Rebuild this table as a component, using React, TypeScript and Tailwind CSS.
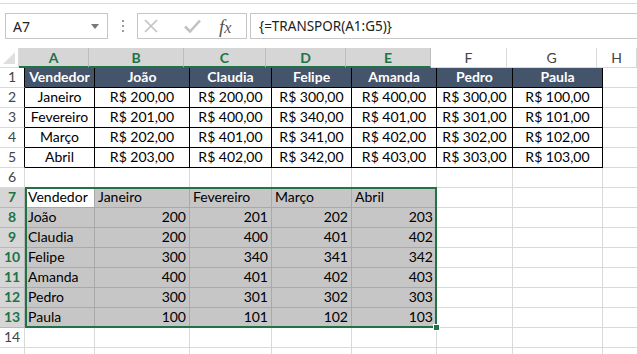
import React from 'react';

const COLS = ['A', 'B', 'C', 'D', 'E', 'F', 'G', 'H'];
const WIDTHS = ['w-[70px]', 'w-[95px]', 'w-[82px]', 'w-[80px]', 'w-[85px]', 'w-[76px]', 'w-[90px]', 'w-[40px]'];

const table = [
  ['Vendedor', 'João', 'Claudia', 'Felipe', 'Amanda', 'Pedro', 'Paula'],
  ['Janeiro', 'R$ 200,00', 'R$ 200,00', 'R$ 300,00', 'R$ 400,00', 'R$ 300,00', 'R$ 100,00'],
  ['Fevereiro', 'R$ 201,00', 'R$ 400,00', 'R$ 340,00', 'R$ 401,00', 'R$ 301,00', 'R$ 101,00'],
  ['Março', 'R$ 202,00', 'R$ 401,00', 'R$ 341,00', 'R$ 402,00', 'R$ 302,00', 'R$ 102,00'],
  ['Abril', 'R$ 203,00', 'R$ 402,00', 'R$ 342,00', 'R$ 403,00', 'R$ 303,00', 'R$ 103,00'],
];

const transposed = [
  ['Vendedor', 'Janeiro', 'Fevereiro', 'Março', 'Abril'],
  ['João', '200', '201', '202', '203'],
  ['Claudia', '200', '400', '401', '402'],
  ['Felipe', '300', '340', '341', '342'],
  ['Amanda', '400', '401', '402', '403'],
  ['Pedro', '300', '301', '302', '303'],
  ['Paula', '100', '101', '102', '103'],
];

const cellValue = (row: number, col: number) => {
  if (row >= 1 && row <= 5 && col <= 6) return table[row - 1][col];
  if (row >= 7 && row <= 13 && col <= 4) return transposed[row - 7][col];
  return '';
};

const Cell = ({ row, col }: { row: number; col: number }) => {
  const inTable = row >= 1 && row <= 5 && col <= 6;
  const isHead = row === 1 && col <= 6;
  const inSel = row >= 7 && row <= 13 && col <= 4;
  const active = row === 7 && col === 0;
  const value = cellValue(row, col);
  const isNum = inSel && row > 7 && col > 0;

  return (
    <div
      className={[
        'box-border h-[20px] shrink-0 border-r border-b overflow-hidden whitespace-nowrap flex items-end pb-[1px] px-[3px] leading-[18px]',
        WIDTHS[col],
        inTable ? 'border-black' : inSel ? 'border-[#a9a9a9]' : 'border-[#d9d9d9]',
        isHead ? 'bg-[#44546a] text-white font-bold justify-center' : '',
        inTable && !isHead ? 'justify-center text-black' : '',
        inSel && !active ? 'bg-[#c6c6c6]' : '',
        active ? 'bg-white' : '',
        isNum ? 'justify-end' : '',
      ].join(' ')}
    >
      {value}
    </div>
  );
};

const RowHeader = ({ row, label }: { row: number; label: boolean }) => {
  const sel = row >= 7 && row <= 13;
  return (
    <div
      className={[
        'box-border w-[25px] h-[20px] shrink-0 border-r border-b flex items-end justify-center pb-[1px] leading-[18px]',
        sel ? 'bg-[#d6d6d6] text-[#217346] font-bold border-b-[#b8b8b8]' : 'bg-white text-[#444]',
        row >= 1 && row <= 5 ? 'border-r-black border-b-[#d9d9d9]' : sel ? 'border-r-[#b8b8b8]' : 'border-[#d9d9d9]',
      ].join(' ')}
    >
      {label ? row : ''}
    </div>
  );
};

export default function App() {
  const rows = Array.from({ length: 15 }, (_, i) => i + 1);

  return (
    <div className="relative w-[637px] h-[354px] overflow-hidden bg-white font-['Lato','Liberation_Sans',sans-serif] text-[14px] text-black">
      {/* Formula bar */}
      <div className="h-[48px] pt-[3px]">
        <div className="border-t border-[#d9d9d9] pt-[9px] flex items-start">
          <div className="ml-[5px] w-[103px] h-[26px] box-border border border-[#c6c6c6] flex items-center justify-between pl-[7px] pr-[8px] font-['Noto_Sans',sans-serif] text-[14px] text-[#222]">
            <span>A7</span>
            <svg width="8" height="5" viewBox="0 0 8 5"><path d="M0 0h8L4 5z" fill="#777" /></svg>
          </div>
          <div className="w-[29px] h-[26px] flex flex-col items-center justify-center gap-[3px]">
            <div className="w-[2px] h-[2px] bg-[#9a9a9a]" />
            <div className="w-[2px] h-[2px] bg-[#9a9a9a]" />
            <div className="w-[2px] h-[2px] bg-[#9a9a9a]" />
          </div>
          <div className="w-[110px] h-[26px] box-border border border-[#c6c6c6] flex items-center">
            <svg className="ml-[5px]" width="16" height="16" viewBox="0 0 16 16">
              <path d="M2 2L14 14M14 2L2 14" stroke="#c2c2c2" strokeWidth="1.6" fill="none" />
            </svg>
            <svg className="ml-[25px]" width="17" height="14" viewBox="0 0 17 14">
              <path d="M1 7.5L6 12.5L16 1.5" stroke="#c2c2c2" strokeWidth="2.6" fill="none" />
            </svg>
            <span className="ml-[18px] font-['Liberation_Serif',serif] italic text-[19px] leading-none text-[#555]">
              f<span className="text-[16px]">x</span>
            </span>
          </div>
          <div className="ml-[3px] flex-1 h-[26px] box-border border border-r-0 border-[#c6c6c6] flex items-center pl-[8px] font-['Noto_Sans',sans-serif] text-[13.5px] text-[#222]">
            {'{=TRANSPOR(A1:G5)}'}
          </div>
        </div>
      </div>

      {/* Column header */}
      <div className="flex h-[20px]">
        <div className="box-border w-[25px] h-[20px] border-r border-b border-[#d9d9d9] flex items-end justify-end p-[3px]">
          <svg width="12" height="12" viewBox="0 0 12 12"><path d="M12 0V12H0z" fill="#dfdfdf" /></svg>
        </div>
        {COLS.map((c, i) =>
          i <= 4 ? (
            <div
              key={c}
              className={['box-border h-[20px] shrink-0 border-r border-r-[#bdbdbd] border-b-2 border-b-[#217346] bg-[#d6d6d6] text-[#217346] font-bold flex items-center justify-center', WIDTHS[i]].join(' ')}
            >
              {c}
            </div>
          ) : (
            <div
              key={c}
              className={['box-border h-[20px] shrink-0 border-r border-b border-[#d9d9d9] bg-white text-[#444] flex items-center justify-center', WIDTHS[i]].join(' ')}
            >
              {c}
            </div>
          )
        )}
      </div>

      {/* Grid */}
      {rows.map((r) => (
        <div key={r} className="flex">
          <RowHeader row={r} label={r < 15} />
          {COLS.map((c, i) => (
            <Cell key={c} row={r} col={i} />
          ))}
        </div>
      ))}

      {/* Selection A7:E13 */}
      <div className="absolute left-[25px] top-[187px] w-[412px] h-[141px] border-2 border-[#217346] pointer-events-none" />
      <div className="absolute left-[433px] top-[324px] w-[7px] h-[7px] bg-[#217346] border border-white pointer-events-none" />
    </div>
  );
}
